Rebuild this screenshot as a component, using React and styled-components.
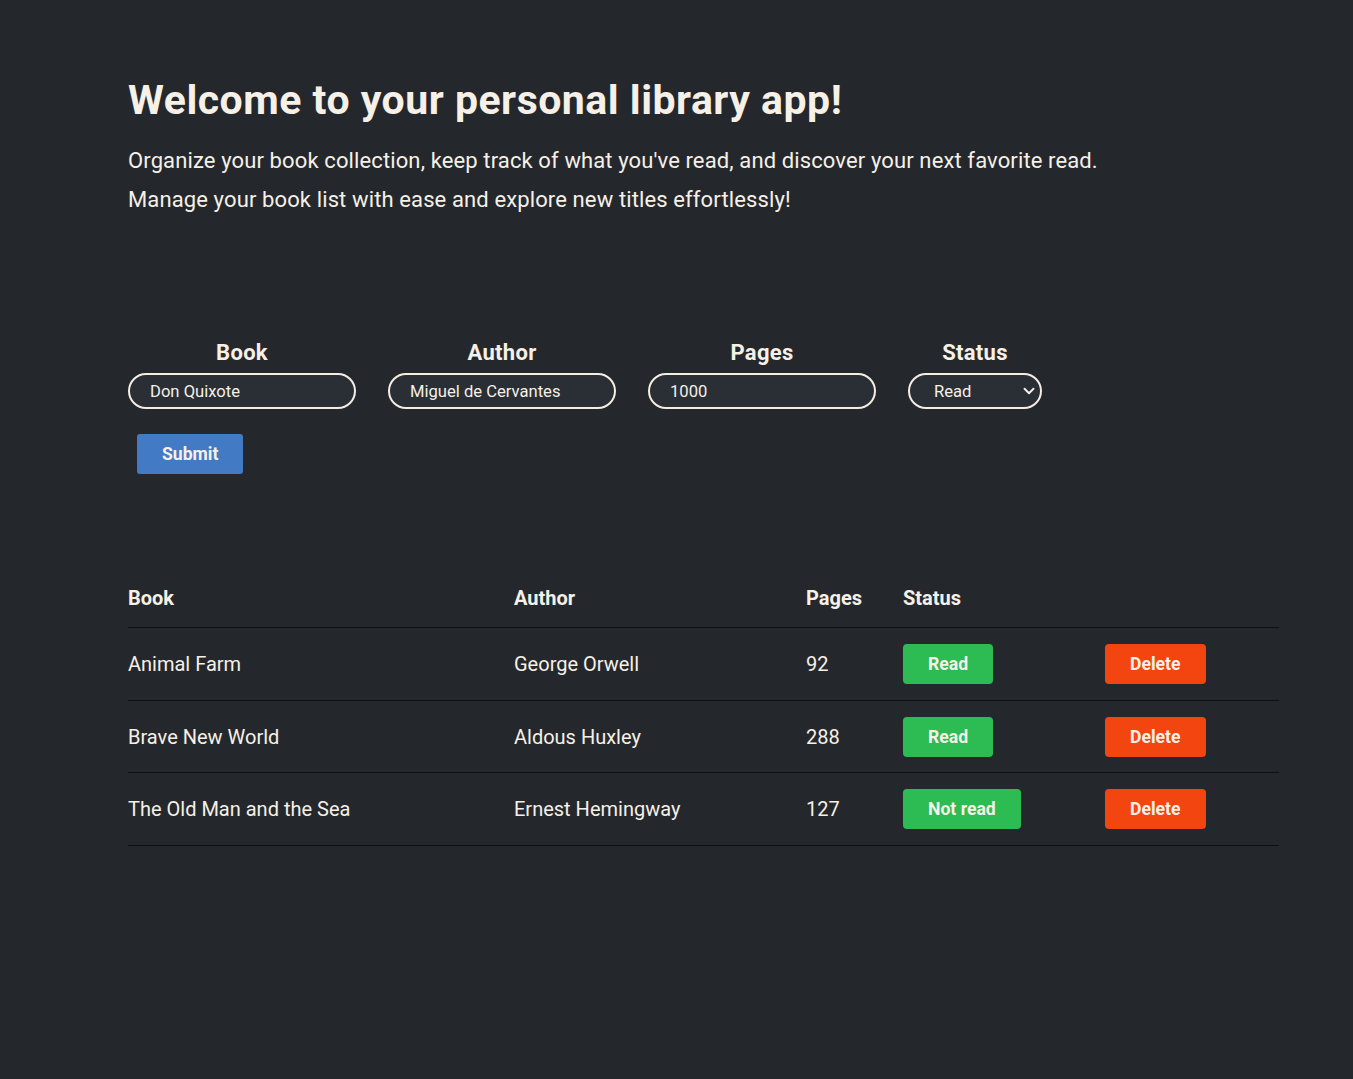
import React from "react";
import styled, { createGlobalStyle } from "styled-components";
import { ChevronDown } from "lucide-react";

const GlobalStyle = createGlobalStyle`
  html, body { margin: 0; padding: 0; }
  body {
    background: #24282d;
    color: #f6f0e7;
    font-family: Roboto, "Noto Sans", sans-serif;
    min-height: 100vh;
  }
  * { box-sizing: border-box; }
`;

const Page = styled.main`
  width: 1151px;
  margin-left: 128px;
  padding-top: 74px;
`;

const Title = styled.h1`
  margin: 0;
  font-size: 41px;
  letter-spacing: 0.5px;
  line-height: 52px;
  font-weight: 700;
`;

const Intro = styled.p`
  margin: 0;
  font-size: 22px;
  letter-spacing: 0.12px;
  line-height: 39px;
`;

const IntroBlock = styled.div`
  margin-top: 15px;
`;

const Form = styled.form`
  margin-top: 121px;
  display: flex;
  flex-direction: column;
  align-items: flex-start;
`;

const Fields = styled.div`
  display: flex;
  gap: 32px;
`;

const Field = styled.label`
  display: flex;
  flex-direction: column;
  align-items: center;
  gap: 8px;
`;

const FieldLabel = styled.span`
  font-size: 22px;
  letter-spacing: 0.3px;
  font-weight: 700;
  line-height: 26px;
`;

const TextInput = styled.input`
  width: ${(p) => p.$w || 228}px;
  height: 36px;
  margin-top: -1px;
  border: 2px solid #f5ede2;
  border-radius: 18px;
  background: #2a2e35;
  color: #f6f0e7;
  font-family: inherit;
  font-size: 16.6px;
  padding: 0 20px;
  outline: none;
`;

const SelectWrap = styled.div`
  position: relative;
  width: 134px;
  margin-top: -1px;
`;

const Select = styled.select`
  appearance: none;
  width: 100%;
  height: 36px;
  border: 2px solid #f5ede2;
  border-radius: 18px;
  background: #2a2e35;
  color: #f6f0e7;
  font-family: inherit;
  font-size: 16.6px;
  padding: 0 20px 0 24px;
  outline: none;
`;

const Chevron = styled(ChevronDown)`
  position: absolute;
  right: 4px;
  top: 9px;
  pointer-events: none;
`;

const Button = styled.button`
  height: 40px;
  padding: 0 25px;
  border: none;
  border-radius: 4px;
  background: ${(p) => p.$bg};
  color: #f6f0e7;
  font-family: inherit;
  font-size: 17.6px;
  font-weight: 700;
  cursor: pointer;
`;

const SubmitButton = styled(Button)`
  margin: 25px 0 0 9px;
  border-radius: 3px;
`;

const Table = styled.table`
  margin-top: 112px;
  width: 100%;
  border-collapse: collapse;
`;

const Th = styled.th`
  text-align: left;
  font-size: 20px;
  font-weight: 700;
  padding: 0 0 17px;
  border-bottom: 1px solid #0e1012;
  width: ${(p) => p.$w}px;
`;

const Td = styled.td`
  font-size: 20px;
  height: 72.7px;
  padding: 0;
  border-bottom: 1px solid #0e1012;
  vertical-align: middle;
`;

const books = [
  { title: "Animal Farm", author: "George Orwell", pages: 92, status: "Read" },
  { title: "Brave New World", author: "Aldous Huxley", pages: 288, status: "Read" },
  { title: "The Old Man and the Sea", author: "Ernest Hemingway", pages: 127, status: "Not read" },
];

export default function App() {
  return (
    <>
      <GlobalStyle />
      <Page>
        <Title>Welcome to your personal library app!</Title>
        <IntroBlock>
          <Intro>
            Organize your book collection, keep track of what you've read, and discover your next favorite read.
          </Intro>
          <Intro>Manage your book list with ease and explore new titles effortlessly!</Intro>
        </IntroBlock>

        <Form onSubmit={(e) => e.preventDefault()}>
          <Fields>
            <Field>
              <FieldLabel>Book</FieldLabel>
              <TextInput defaultValue="Don Quixote" />
            </Field>
            <Field>
              <FieldLabel>Author</FieldLabel>
              <TextInput defaultValue="Miguel de Cervantes" />
            </Field>
            <Field>
              <FieldLabel>Pages</FieldLabel>
              <TextInput defaultValue="1000" />
            </Field>
            <Field>
              <FieldLabel>Status</FieldLabel>
              <SelectWrap>
                <Select defaultValue="Read">
                  <option>Read</option>
                  <option>Not read</option>
                </Select>
                <Chevron size={18} strokeWidth={2.5} color="#f6f0e7" />
              </SelectWrap>
            </Field>
          </Fields>
          <SubmitButton type="submit" $bg="#427ac3">Submit</SubmitButton>
        </Form>

        <Table>
          <thead>
            <tr>
              <Th $w={386}>Book</Th>
              <Th $w={292}>Author</Th>
              <Th $w={97}>Pages</Th>
              <Th $w={202}>Status</Th>
              <Th $w={174}></Th>
            </tr>
          </thead>
          <tbody>
            {books.map((b) => (
              <tr key={b.title}>
                <Td>{b.title}</Td>
                <Td>{b.author}</Td>
                <Td>{b.pages}</Td>
                <Td>
                  <Button $bg="#2dbb53">{b.status}</Button>
                </Td>
                <Td>
                  <Button $bg="#f2450f">Delete</Button>
                </Td>
              </tr>
            ))}
          </tbody>
        </Table>
      </Page>
    </>
  );
}
